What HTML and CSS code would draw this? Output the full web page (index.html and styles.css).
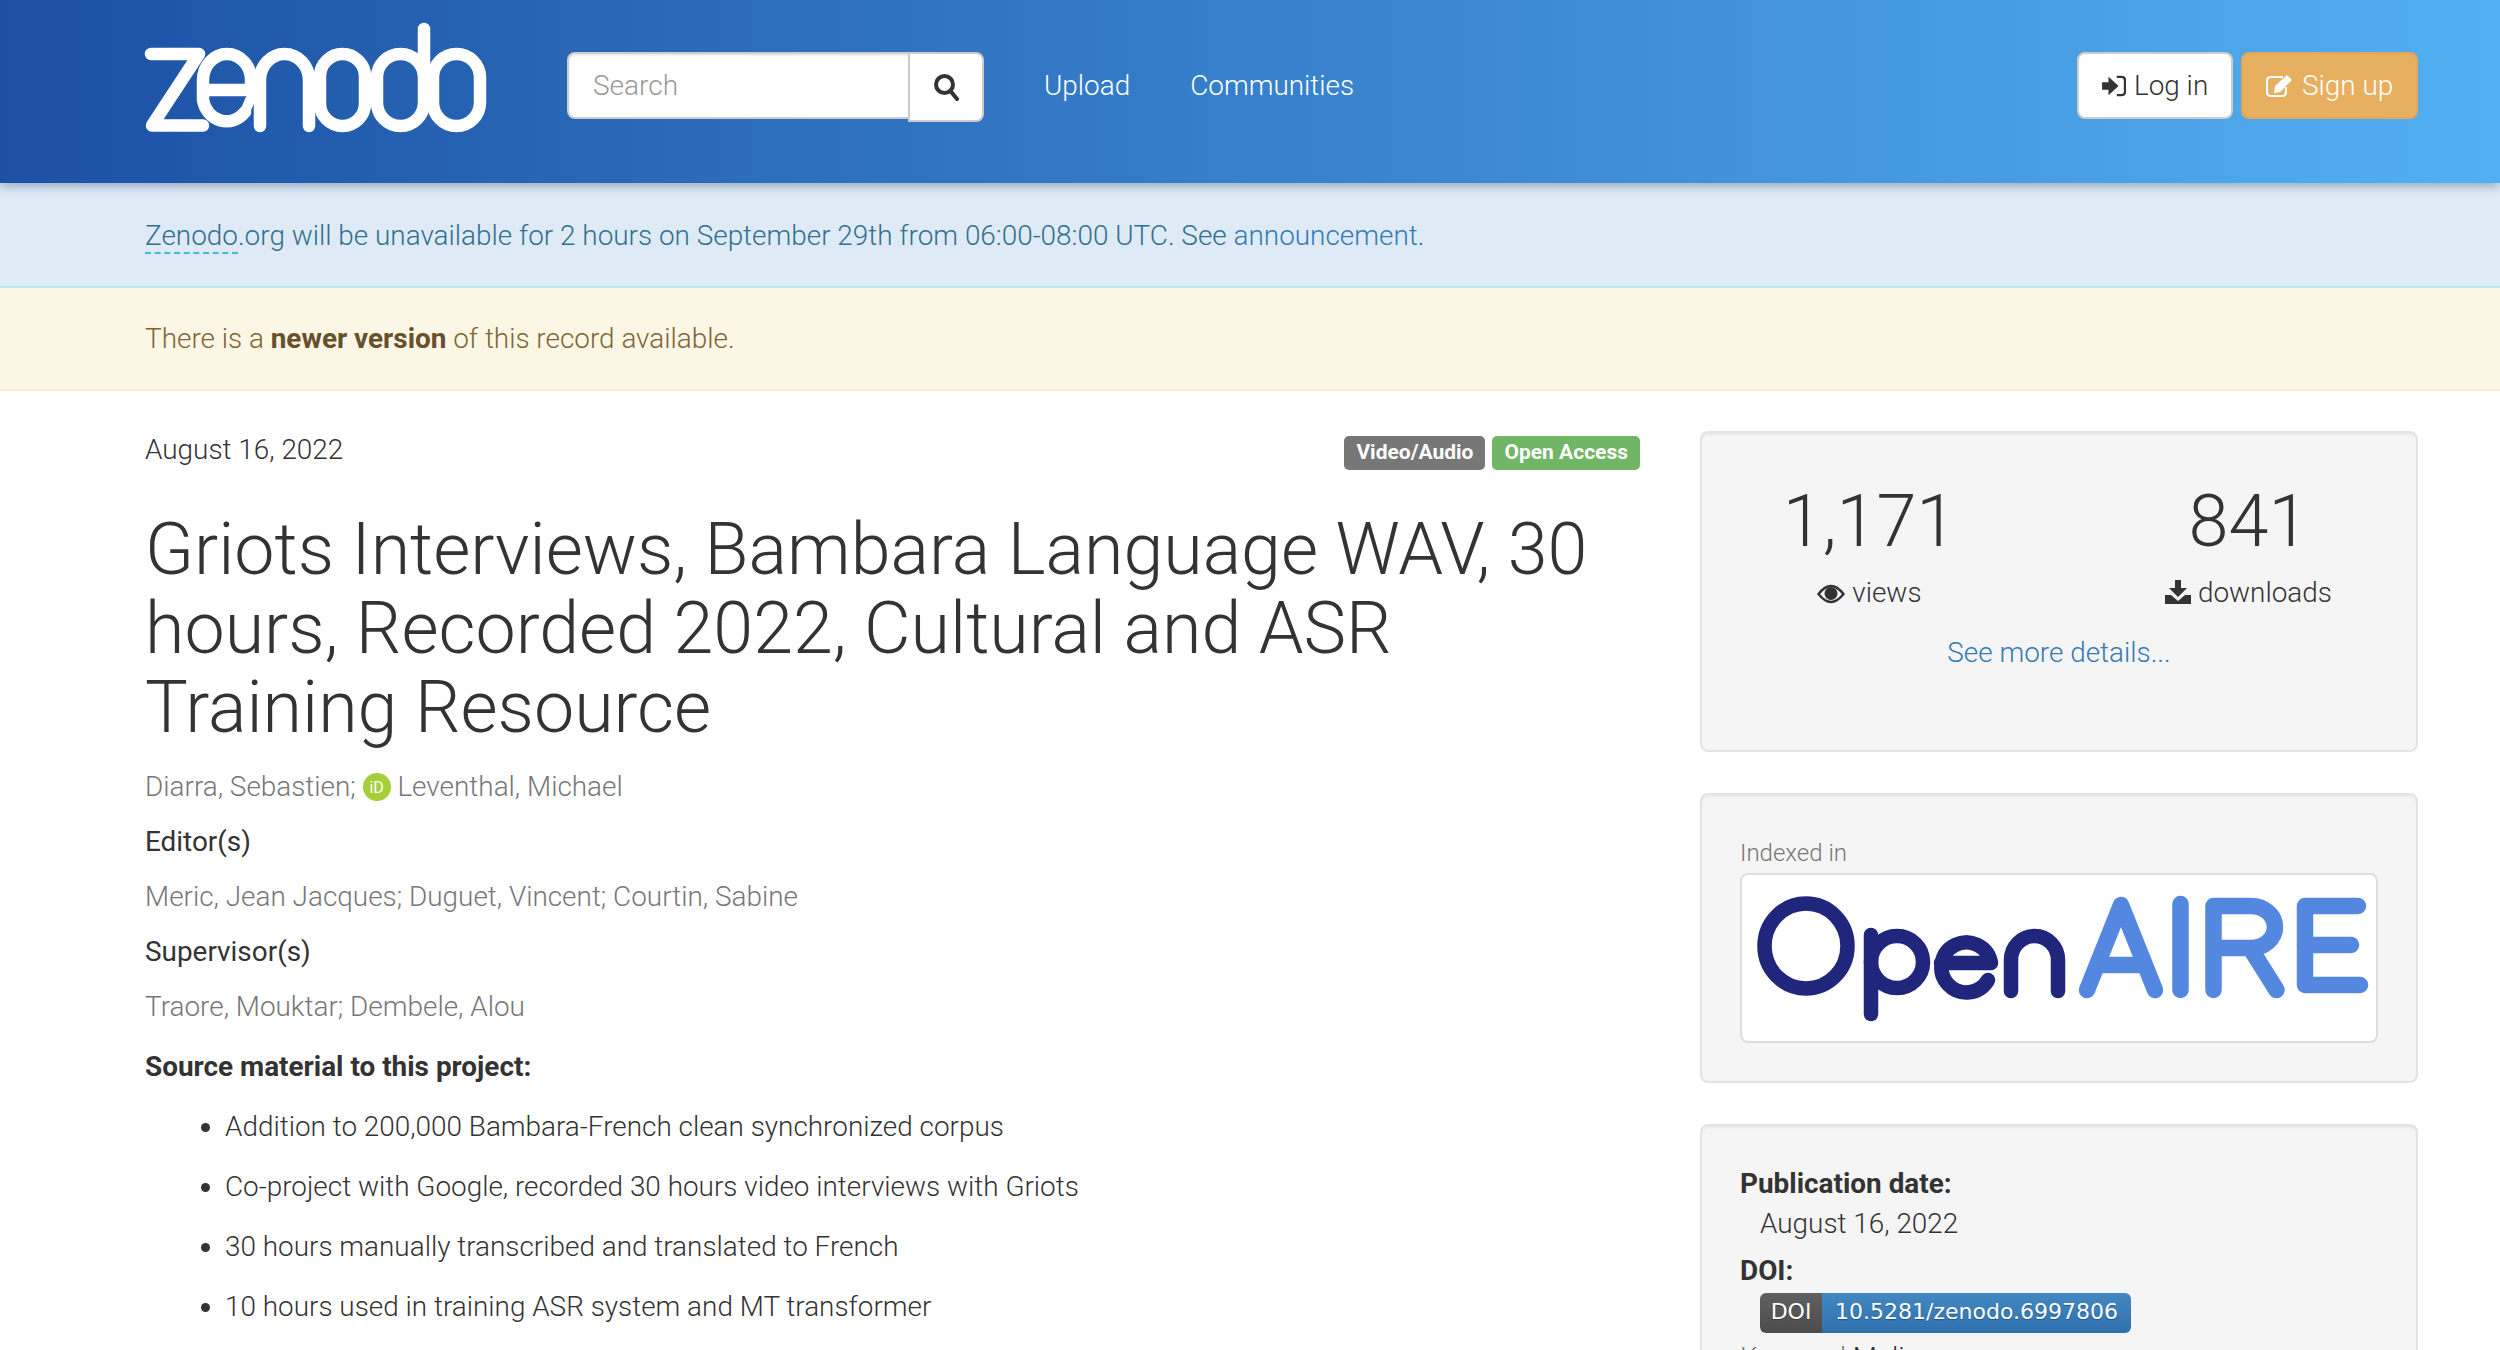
FILE: index.html
```html
<!DOCTYPE html>
<html lang="en">
<head>
  <title>Griots Interviews, Bambara Language WAV | Zenodo</title>
  <meta charset="utf-8">
  <link rel="stylesheet" href="styles.css">
</head>
<body>
  <header class="navbar">
    <a class="logo" href="#">
      <svg class="logo-img" viewBox="0 0 360 125" fill="none" stroke="#fff" stroke-width="12.5" stroke-linecap="round" stroke-linejoin="round">
        <polyline points="10,39 58,39 11,110.5 62,110.5"/>
        <path d="M62,75 V65 A24,26 0 0 1 110,65 V75 H62 V85 A24,26 0 0 0 104,97"/>
        <path d="M104,97 L109,85" stroke-width="10"/>
        <path d="M108,78.5 H120" stroke-width="18" stroke-linecap="butt"/>
        <path d="M119,111 V65 A24.5,26 0 0 1 168,65 V111"/>
        <rect x="179" y="39" width="45" height="72" rx="22.5"/>
        <rect x="236" y="39" width="47" height="72" rx="23.5"/>
        <line x1="283" y1="14" x2="283" y2="60"/>
        <rect x="292" y="39" width="47" height="72" rx="23.5"/>
      </svg>
    </a>
    <form class="search">
      <input class="search-input" type="text" placeholder="Search">
      <button class="search-btn" type="button">
        <svg class="icon-search" viewBox="0 0 26 28" fill="none" stroke="#333" stroke-width="4"><circle cx="11.5" cy="11.5" r="8.5"/><line x1="17.5" y1="18" x2="24" y2="26" stroke-linecap="round"/></svg>
      </button>
    </form>
    <nav class="nav-links">
      <a href="#">Upload</a>
      <a href="#">Communities</a>
    </nav>
    <div class="nav-right">
      <a class="btn btn-login" href="#">
        <svg class="icon-btn" viewBox="0 0 26 24"><path d="M0,8 H7 V2 L18,12 L7,22 V16 H0 Z" fill="#333"/><path d="M16,2 H21 Q25,2 25,6 V18 Q25,22 21,22 H16" fill="none" stroke="#333" stroke-width="2.5"/></svg>Log in
      </a>
      <a class="btn btn-signup" href="#">
        <svg class="icon-btn icon-edit" viewBox="0 0 28 24"><path d="M20,13 V18 Q20,22 16,22 H5 Q1,22 1,18 V7 Q1,3 5,3 H17" fill="none" stroke="#fff" stroke-width="2.2"/><path d="M9,12 L21,1 L26,6 L14,18 L8,19 Z" fill="#fff"/></svg>Sign up
      </a>
    </div>
  </header>

  <div class="banner banner-info">
    <abbr class="abbr">Zenodo</abbr>.org will be unavailable for 2 hours on September 29th from 06:00-08:00 UTC. See <a href="#">announcement</a>.
  </div>
  <div class="banner banner-warn">
    There is a <b>newer version</b> of this record available.
  </div>

  <main class="content">
    <section class="record">
      <div class="record-top">
        <span class="date">August 16, 2022</span>
        <span class="labels">
          <span class="label label-gray">Video/Audio</span>
          <span class="label label-green">Open Access</span>
        </span>
      </div>
      <h1 class="title">Griots Interviews, Bambara Language WAV, 30 hours, Recorded 2022, Cultural and ASR Training Resource</h1>
      <p class="people">Diarra, Sebastien; <span class="orcid">iD</span> Leventhal, Michael</p>
      <h4 class="people-head">Editor(s)</h4>
      <p class="people">Meric, Jean Jacques; Duguet, Vincent; Courtin, Sabine</p>
      <h4 class="people-head">Supervisor(s)</h4>
      <p class="people">Traore, Mouktar; Dembele, Alou</p>
      <p class="desc-head"><b>Source material to this project:</b></p>
      <ul class="desc-list">
        <li>Addition to 200,000 Bambara-French clean synchronized corpus</li>
        <li>Co-project with Google, recorded 30 hours video interviews with Griots</li>
        <li>30 hours manually transcribed and translated to French</li>
        <li>10 hours used in training ASR system and MT transformer</li>
      </ul>
    </section>

    <aside class="sidebar">
      <div class="well well-stats">
        <div class="stats">
          <div class="stat">
            <div class="stat-num">1,171</div>
            <div class="stat-name">
              <svg class="icon-eye" viewBox="0 0 28 20"><path d="M1.5,10 Q14,-6 26.5,10 Q14,26 1.5,10 Z" fill="none" stroke="#333" stroke-width="2.4"/><circle cx="14" cy="9.5" r="6.5" fill="#333"/></svg> views
            </div>
          </div>
          <div class="stat">
            <div class="stat-num">841</div>
            <div class="stat-name">
              <svg class="icon-dl" viewBox="0 0 26 24"><path d="M10,0 H16 V8 H22 L13,17 L4,8 H10 Z" fill="#333"/><path d="M0,15 H6 L13,21 L20,15 H26 V24 H0 Z" fill="#333"/></svg> downloads
            </div>
          </div>
        </div>
        <a class="more" href="#">See more details...</a>
      </div>

      <div class="well well-indexed">
        <div class="indexed">Indexed in</div>
        <div class="thumb">
          <svg class="openaire" viewBox="0 0 636 170" fill="none" stroke-linecap="round" stroke-linejoin="round">
            <g stroke="#1f267c" stroke-width="14.5">
              <ellipse cx="65" cy="73" rx="41.5" ry="42.5"/>
              <path d="M130,62 V141"/>
              <circle cx="156" cy="89" r="26"/>
              <path d="M200,90 H250 A25,25 0 1 0 247,107" />
              <path d="M270,118 V87 A23.5,24 0 0 1 317,87 V118"/>
            </g>
            <g stroke="#5488e0" stroke-width="16.5">
              <path d="M346,117 L380,32 L414,117"/>
              <path d="M357,92 H403"/>
              <path d="M439.5,31 V117"/>
              <path d="M472.5,117 V33 H510 A24,21 0 0 1 510,75 H472.5"/>
              <path d="M511,78 L535.5,117"/>
              <path d="M617,33 H564 V112 H619"/>
              <path d="M564,72 H610"/>
            </g>
          </svg>
        </div>
      </div>

      <div class="well well-meta">
        <dl class="meta">
          <dt>Publication date:</dt>
          <dd>August 16, 2022</dd>
          <dt>DOI:</dt>
          <dd class="meta-doi"><a class="doi" href="#"><span class="doi-key">DOI</span><span class="doi-val">10.5281/zenodo.6997806</span></a></dd>
          <dd class="meta-next"><span class="meta-key">Keyword</span> Mali</dd>
        </dl>
      </div>
    </aside>
  </main>
</body>
</html>
```

FILE: styles.css
```css
html {
  font-family: Roboto, "Liberation Sans", sans-serif;
  font-size: 27.9px;
  font-weight: 300;
  line-height: 40px;
  color: #333;
}

body {
  margin: 0;
  height: 1350px;
  overflow: hidden;
  background-color: #fff;
}

a {
  color: #337ab7;
  text-decoration: none;
}

b {
  font-weight: 700;
}

/* top bar */
.navbar {
  display: flex;
  align-items: center;
  height: 183px;
  padding: 0 82px 0 145px;
  background-image: linear-gradient(to right, #1c50a4, #52b0f2);
  box-sizing: border-box;
  position: relative;
  box-shadow: 0 3px 10px rgba(0, 40, 90, .35);
}

.logo {
  display: block;
  width: 360px;
  height: 125px;
  margin: -28px 66px 0 -4px;
}

.logo-img {
  display: block;
  width: 360px;
  height: 125px;
}

.search {
  display: flex;
  align-items: flex-start;
  margin: -9px 0 0 0;
}

.search-input {
  width: 341px;
  height: 67px;
  padding: 0 24px;
  font: 300 28px Roboto, sans-serif;
  color: #555;
  background-color: #fff;
  border: 2px solid #ccc;
  border-right: none;
  border-radius: 8px 0 0 8px;
  box-sizing: border-box;
  box-shadow: inset 0 2px 2px rgba(0, 0, 0, .075);
  outline: none;
}

.search-input::placeholder {
  color: #999;
}

.search-btn {
  display: flex;
  align-items: center;
  justify-content: center;
  width: 76px;
  height: 70px;
  padding: 0;
  background-color: #fff;
  border: 2px solid #ccc;
  border-radius: 0 8px 8px 0;
  box-sizing: border-box;
}

.icon-search {
  width: 26px;
  height: 28px;
}

.nav-links {
  display: flex;
  gap: 60px;
  margin: -11px 0 0 60px;
}

.nav-links a {
  color: #fff;
  font-weight: 300;
}

.nav-right {
  display: flex;
  gap: 8px;
  margin: -12px 0 0 auto;
}

.btn {
  display: flex;
  align-items: center;
  height: 67px;
  padding: 0 23px;
  border: 2px solid #ccc;
  border-radius: 8px;
  box-sizing: border-box;
  white-space: nowrap;
}

.btn-login {
  width: 156px;
  color: #333;
  background-color: #fff;
}

.btn-signup {
  width: 177px;
  color: #fff;
  background-color: #e7af60;
  border-color: #e6a655;
}

.icon-btn {
  width: 24px;
  height: 22px;
  margin-right: 8px;
  flex: none;
}

.icon-edit {
  width: 28px;
  height: 24px;
}

/* notice strips */
.banner {
  padding: 0 145px;
  box-sizing: border-box;
}

.banner-info {
  height: 105px;
  line-height: 105px;
  color: #31708f;
  background-color: #deebf6;
  border-bottom: 2px solid #bce8f1;
}

.banner-warn {
  height: 103px;
  line-height: 102px;
  color: #7f6535;
  background-color: #fbf7e4;
  border-bottom: 2px solid #faebcc;
}

.banner-warn b {
  color: #66512c;
}

.abbr {
  border-bottom: 2px dashed #46b8da;
}

/* main columns */
.content {
  display: flex;
  padding: 0 82px 0 145px;
}

.record {
  flex: none;
  width: 1495px;
  margin-right: 60px;
}

.record-top {
  display: flex;
  justify-content: space-between;
  padding-top: 39px;
}

.labels {
  display: flex;
  gap: 7px;
}

.label {
  height: 34px;
  margin-top: 6px;
  padding: 0 12px;
  font-size: 21px;
  font-weight: 700;
  line-height: 32px;
  color: #fff;
  border-radius: 5px;
}

.label-gray {
  background-color: #777;
}

.label-green {
  background-color: #71b566;
}

.title {
  margin: 40px 0 20px;
  font-size: 71.75px;
  font-weight: 300;
  line-height: 79px;
}

.people {
  margin: 0;
  color: #777;
}

.orcid {
  display: inline-block;
  width: 28px;
  height: 28px;
  margin: -8px 0;
  font-size: 16px;
  font-weight: 400;
  line-height: 29px;
  text-align: center;
  vertical-align: 3px;
  color: #fff;
  background-color: #a6ce39;
  border-radius: 50%;
}

.people-head {
  margin: 15px 0;
  font-size: 27.9px;
  font-weight: 400;
  line-height: 40px;
  color: #333;
}

.desc-head {
  margin: 20px 0;
}

.desc-list {
  margin: 0;
  padding-left: 80px;
}

.desc-list li {
  margin-bottom: 20px;
}

/* right column */
.sidebar {
  flex: none;
  width: 718px;
  padding-top: 40px;
}

.well {
  margin-bottom: 41px;
  padding: 38px;
  background-color: #f5f5f5;
  border: 2px solid #e3e3e3;
  border-radius: 8px;
  box-sizing: border-box;
  box-shadow: inset 0 2px 2px rgba(0, 0, 0, .05);
}

.well-stats {
  height: 321px;
  text-align: center;
}

.stats {
  display: flex;
  margin: 0 -60px;
}

.stat {
  flex: 1;
}

.stat-num {
  margin-top: 11px;
  font-size: 72px;
  line-height: 80px;
}

.stat-name {
  margin-top: 11px;
  line-height: 40px;
}

.icon-eye {
  width: 28px;
  height: 20px;
  vertical-align: -2px;
}

.icon-dl {
  width: 26px;
  height: 24px;
  vertical-align: -2px;
}

.more {
  display: block;
  margin-top: 20px;
}

.well-indexed {
  height: 290px;
}

.indexed {
  margin: 2px 0;
  font-size: 24px;
  line-height: 36px;
  color: #777;
}

.thumb {
  height: 170px;
  background-color: #fff;
  border: 2px solid #ddd;
  border-radius: 8px;
  box-sizing: border-box;
}

.openaire {
  display: block;
  width: 636px;
  height: 170px;
  margin: -2px -2px -2px -1px;
}

.meta {
  margin: 0;
}

.meta dt {
  font-weight: 700;
}

.meta dd {
  margin: 0 0 7px 20px;
}

.meta .meta-doi {
  margin-top: 2px;
  margin-bottom: 5px;
}

.doi {
  display: inline-flex;
  height: 40px;
  font: 400 22px "DejaVu Sans", sans-serif;
  line-height: 38px;
  color: #fff;
  text-shadow: 0 1px 1px rgba(0, 0, 0, .3);
  border-radius: 6px;
  overflow: hidden;
  vertical-align: top;
}

.doi-key {
  width: 62px;
  text-align: center;
  background-image: linear-gradient(#606060, #4c4c4c);
}

.doi-val {
  width: 309px;
  text-align: center;
  background-image: linear-gradient(#4288c2, #2e70ae);
}

.meta .meta-next {
  margin-left: 0;
}

.meta-key {
  color: #777;
}
```
